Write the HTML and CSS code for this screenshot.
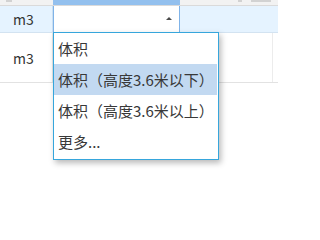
FILE: index.html
```html
<!DOCTYPE html>
<html>
<head>
<meta charset="utf-8">
<link rel="stylesheet" href="styles.css">
</head>
<body>
<div class="page">
  <div class="grid">
    <div class="header">
      <div class="hcell c1"><span class="hmark hm1"></span></div>
      <div class="hcell c2 sel"></div>
      <div class="hcell c3"><span class="hmark hm2"></span><span class="hmark hm3"></span></div>
    </div>
    <div class="row r1">
      <div class="cell c1">m3</div>
      <div class="cell c2 editor"><span class="arrow"></span></div>
      <div class="cell c3"></div>
    </div>
    <div class="row r2">
      <div class="cell c1">m3</div>
      <div class="cell c2"></div>
      <div class="cell c3"></div>
      <div class="cell c4"></div>
    </div>
  </div>
  <ul class="dropdown">
    <li class="item">体积</li>
    <li class="item active">体积（高度3.6米以下）</li>
    <li class="item">体积（高度3.6米以上）</li>
    <li class="item">更多...</li>
  </ul>
</div>
</body>
</html>
```
FILE: styles.css
```css
html, body {
  margin: 0;
  padding: 0;
  background: #ffffff;
}
body {
  font-family: "Noto Sans CJK SC", "Noto Sans", sans-serif;
  font-size: 14px;
  color: #333333;
}
.page {
  position: relative;
  width: 278px;
  height: 221px;
  overflow: hidden;
}
.grid {
  display: flex;
  flex-direction: column;
}
.header, .row {
  display: flex;
}
.c1 {
  width: 53px;
  flex: none;
  box-sizing: border-box;
}
.c2 {
  width: 127px;
  flex: none;
  box-sizing: border-box;
}
.c3 {
  flex: 1;
}
.c4 {
  width: 6px;
  flex: none;
  box-sizing: border-box;
  border-left: 1px solid #ececec;
}
.header {
  height: 5px;
  background: #f2f2f2;
  border-bottom: 1px solid #dadada;
}
.hcell {
  position: relative;
  height: 5px;
}
.hcell.sel {
  background: #93c0ee;
}
.hmark {
  position: absolute;
  top: 0;
  height: 2px;
  background: #d2d2d2;
}
.hm1 { left: 6px; width: 6px; }
.hm2 { left: 58px; width: 4px; }
.hm3 { left: 71px; width: 20px; }
.r1 {
  height: 26px;
  background: #e5f3ff;
  border-bottom: 1px solid #d3e3f1;
}
.r2 {
  height: 49px;
  border-bottom: 1px solid #e2e2e2;
}
.cell {
  display: flex;
  align-items: center;
  line-height: 1;
}
.cell.c1 {
  padding-left: 13px;
  border-right: 1px solid #e6e6e6;
}
.r1 .cell.c1 {
  border-right-color: #cadff1;
}
.editor {
  background: #ffffff;
  border-left: 1px solid #7fb3e8;
  border-right: 1px solid #7fb3e8;
  justify-content: flex-end;
  padding-right: 7px;
}
.arrow {
  width: 0;
  height: 0;
  border-left: 3px solid transparent;
  border-right: 3px solid transparent;
  border-bottom: 3px solid #4a4a4a;
  margin-top: -1px;
}
.dropdown {
  position: absolute;
  left: 53px;
  top: 32px;
  width: 166px;
  height: 128px;
  box-sizing: border-box;
  margin: 0;
  padding: 0 1px 2px 0;
  list-style: none;
  background: #ffffff;
  border: 1px solid #36a6dc;
  box-shadow: 2px 3px 6px rgba(0, 0, 0, 0.28);
}
.item {
  height: 31px;
  line-height: 31px;
  padding-left: 4px;
  font-size: 15px;
  white-space: nowrap;
  color: #383838;
}
.item.active {
  background: #c2d9f1;
}
```
